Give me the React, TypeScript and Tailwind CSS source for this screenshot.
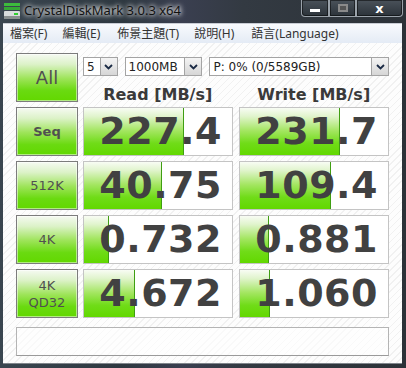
import React from 'react';

const rows = [
  { label: 'Seq', read: '227.4', rw: 100, write: '231.7', ww: 100 },
  { label: '512K', read: '40.75', rw: 78, write: '109.4', ww: 91 },
  { label: '4K', read: '0.732', rw: 25, write: '0.881', ww: 29 },
  { label: '4K QD32', read: '4.672', rw: 51, write: '1.060', ww: 30 },
];

const dv = { fontFamily: '"DejaVu Sans", Verdana, sans-serif' };

// green test button on the left
function TestButton({ label, big }: { label: string; big?: boolean }) {
  const parts = label.split(' ');
  return (
    <div className="h-full w-full border border-[#7c7c7c] bg-[linear-gradient(to_bottom,#f6faf2_0%,#dcf2c8_22%,#9ee45a_52%,#6ada10_78%,#62d800_100%)] shadow-[inset_0_0_0_1px_rgba(255,255,255,0.5)] flex flex-col items-center justify-center text-[#505050] leading-[17px]"
      style={dv}>
      {big
        ? <span className="text-[18px]">{label}</span>
        : parts.map((p) => <span key={p} className={label === 'Seq' ? 'text-[13px] font-semibold' : 'text-[13px]'}>{p}</span>)}
    </div>
  );
}

// value cell with green bar behind the number
function ValueBox({ value, bar }: { value: string; bar: number }) {
  return (
    <div className="relative h-full w-full border border-[#c4c4c4] bg-white overflow-hidden">
      <div
        className="absolute left-0 top-0 bottom-0 border-r border-[#3f9e12] bg-[linear-gradient(to_bottom,#f8fcf4_0%,#e0f4cc_18%,#a4e662_48%,#70dc18_75%,#62d800_100%)]"
        style={{ width: bar }}
      />
      <div className="relative h-full flex items-center justify-end pr-[10px] text-[38px] font-bold text-[#414141] tracking-[0.5px]" style={dv}>
        {value}
      </div>
    </div>
  );
}

function Select({ w, text }: { w: string; text: string }) {
  return (
    <div className={`${w} h-[19px] border border-[#a4a4a4] bg-white flex items-center`}>
      <span className="flex-1 pl-[3px] text-[12px] text-[#222] leading-none whitespace-nowrap" style={dv}>{text}</span>
      <div className="h-full w-[17px] border-l border-[#a4a4a4] bg-[linear-gradient(to_bottom,#f4f4f4,#d6d6d6)] flex items-center justify-center">
        <svg width="9" height="6" viewBox="0 0 9 6"><path d="M1 1 L4.5 4.5 L8 1" fill="none" stroke="#1a2a44" strokeWidth="1.8" /></svg>
      </div>
    </div>
  );
}

function CapButton({ w, children, close }: { w: string; children: React.ReactNode; close?: boolean }) {
  return (
    <div className={`${w} h-[17px] border border-t-0 border-[#9aa2aa] ${close ? 'rounded-br-[4px]' : ''} bg-[linear-gradient(to_bottom,#4a525a,#2c333a)] flex items-center justify-center shadow-[inset_0_0_0_1px_rgba(0,0,0,0.5)]`}>
      {children}
    </div>
  );
}

export default function App() {
  return (
    <div className="w-[406px] h-[368px] overflow-hidden bg-[linear-gradient(to_right,#3a4650_0%,#2e3840_30%,#3a3f50_45%,#333a42_60%,#2c3238_100%)] flex flex-col">
      {/* title bar */}
      <div className="h-[23px] flex items-start relative">
        <div className="flex items-center h-[22px] pl-[3px] gap-[3px]">
          <svg width="18" height="18" viewBox="0 0 18 18">
            <rect x="1" y="1" width="16" height="3" fill="#3dbb3d" />
            <rect x="1" y="5" width="16" height="3" fill="#35a835" />
            <rect x="1" y="9" width="16" height="8" rx="1" fill="#d8dcdc" />
            <rect x="1" y="14" width="16" height="3" fill="#8a9090" />
            <rect x="11" y="11" width="4" height="2" fill="#2fcf2f" />
          </svg>
          <span className="text-[13px] text-[#111] [text-shadow:0_0_6px_#fff,0_0_4px_#fff]" style={{ fontFamily: '"Noto Sans", "Open Sans", sans-serif' }}>
            CrystalDiskMark 3.0.3 x64
          </span>
        </div>
        <div className="absolute right-[3px] top-0 flex">
          <CapButton w="w-[28px] rounded-bl-[4px]">
            <div className="w-[10px] h-[3px] bg-white mt-[4px]" />
          </CapButton>
          <CapButton w="w-[27px]">
            <div className="w-[10px] h-[8px] border-[2px] border-[#8a8a8a] bg-[#555]" />
          </CapButton>
          <CapButton w="w-[47px]" close>
            <span className="text-white font-bold text-[13px] leading-none" style={dv}>x</span>
          </CapButton>
        </div>
      </div>

      {/* window body */}
      <div className="flex-1 px-[3px] pb-[4px] pr-[4px] flex flex-col">
        {/* menu bar */}
        <div className="h-[20px] border-t border-[#c8ccd4] bg-[linear-gradient(to_bottom,#f8fafd,#e4ebf5)] flex items-center gap-[15px] pl-[7px] text-[12px] text-[#333]"
          style={{ fontFamily: '"Noto Sans", "Noto Sans CJK TC", sans-serif' }}>
          <span>檔案(F)</span>
          <span>編輯(E)</span>
          <span className="ml-[2px]">佈景主題(T)</span>
          <span>說明(H)</span>
          <span className="ml-[2px]">語言(Language)</span>
        </div>

        {/* client */}
        <div className="flex-1 bg-[repeating-linear-gradient(135deg,#fdfdfd_0px,#fdfdfd_4px,#f1f1f1_4px,#f1f1f1_5px)] border-b border-[#80868c] pl-[13px] pt-[10px]">
          <div className="grid grid-cols-[62px_150px_151px] grid-rows-[49px_49px_49px_49px_49px] gap-x-[5px] gap-y-[5px]">
            <TestButton label="All" big />
            <div className="col-span-2 flex flex-col">
              <div className="flex gap-[7px] mt-[4px]">
                <Select w="w-[35px]" text="5" />
                <Select w="w-[79px]" text="1000MB" />
                <Select w="w-[182px]" text="P: 0% (0/5589GB)" />
              </div>
              <div className="flex mt-[7px] text-[16px] font-bold text-[#3a3a3a]" style={dv}>
                <div className="w-[150px] text-center">Read [MB/s]</div>
                <div className="w-[157px] text-center pl-[6px]">Write [MB/s]</div>
              </div>
            </div>
            {rows.map((r) => (
              <React.Fragment key={r.label}>
                <TestButton label={r.label} />
                <ValueBox value={r.read} bar={r.rw} />
                <div className="pl-[1px]"><ValueBox value={r.write} bar={r.ww} /></div>
              </React.Fragment>
            ))}
          </div>
          <div className="mt-[9px] w-[373px] h-[29px] border border-[#b4b4b4] border-b-[#9a9a9a] bg-white/60" />
        </div>
      </div>
    </div>
  );
}
